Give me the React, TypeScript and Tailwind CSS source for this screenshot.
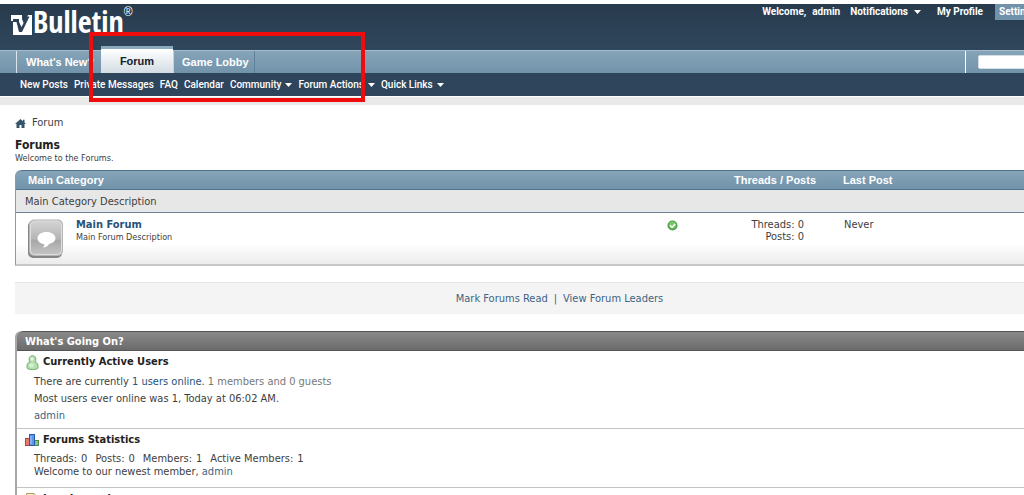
import type { ReactNode } from 'react';

const subLinks = [
  { label: 'New Posts' },
  { label: 'Private Messages' },
  { label: 'FAQ' },
  { label: 'Calendar' },
  { label: 'Community', menu: true },
  { label: 'Forum Actions', menu: true },
  { label: 'Quick Links', menu: true },
];

function Caret() {
  return (
    <svg className="h-1 w-[7px]" viewBox="0 0 7 4" fill="#fff" aria-hidden="true">
      <path d="M0 0h7L3.5 4z" />
    </svg>
  );
}

function Logo() {
  return (
    <a href="#" className="flex items-end text-white" aria-label="vBulletin">
      <svg className="mb-1 h-[22px] w-[22px]" viewBox="0 0 22 22" aria-hidden="true">
        <path fill="#fff" d="M0 1h11v4l2 5L17 1h4v20H2V7H0z" />
        <path fill="#2d4257" d="M2 5h6v3l2.500 5L16 2.500h2.500L11 18H8L5.500 8H2z" />
      </svg>
      <span className="font-['Open_Sans_Condensed','Noto_Sans_ExtraCondensed','Liberation_Sans_Narrow',sans-serif] text-[30px] leading-9 font-bold">
        Bulletin
      </span>
      <span className="mb-5 font-['Liberation_Sans',sans-serif] text-[12px] leading-4 font-normal">®</span>
    </a>
  );
}

function ForumIcon() {
  return (
    <svg className="h-[39px] w-9" viewBox="0 0 36 39" aria-hidden="true">
      <defs>
        <linearGradient id="tile" x1="0" y1="0" x2="0" y2="1">
          <stop offset="0" stopColor="#d4d4d4" />
          <stop offset=".55" stopColor="#b4b4b4" />
          <stop offset=".56" stopColor="#a6a6a6" />
          <stop offset="1" stopColor="#c4c4c4" />
        </linearGradient>
      </defs>
      <rect x="0" y="2" width="34" height="37" rx="5" fill="#858585" />
      <rect x="1" y="0.5" width="34" height="36.5" rx="5" fill="#b5b5b5" />
      <rect x="2.500" y="2" width="31" height="33.500" rx="4" fill="url(#tile)" stroke="#dedede" />
      <path
        fill="#fff"
        d="M18.500 13c-5 0-9 2.700-9 6.200 0 3.200 3 5.600 7 6l-1.200 3.600c3-.8 5-2.200 6-4 3.600-.8 6.200-3 6.200-5.600 0-3.500-4-6.200-9-6.200z"
      />
    </svg>
  );
}

function CheckIcon() {
  return (
    <svg className="h-[11px] w-[11px]" viewBox="0 0 11 11" role="img" aria-label="Open">
      <circle cx="5.500" cy="5.500" r="5" fill="#4fa644" />
      <circle cx="5.500" cy="5" r="3.600" fill="#7cc470" />
      <path d="M3 5.300l2 2 3.200-3.400" fill="none" stroke="#fff" strokeWidth="1.500" />
    </svg>
  );
}

function UserIcon() {
  return (
    <svg className="h-[15px] w-[13px]" viewBox="0 0 13 15" aria-hidden="true">
      <path
        d="M6.500 .7c2 0 3.400 1.500 3.400 3.400 0 1.200-.4 2-.9 2.700 2 .5 3 2.200 3 4.400v1.700c0 1-2.500 1.600-5.500 1.600S1 13.900 1 12.900v-1.700c0-2.200 1-3.900 3-4.400-.5-.7-.9-1.500-.9-2.700C3.100 2.200 4.500.7 6.500.7z"
        fill="#b3dfae"
        stroke="#6fae6b"
      />
      <ellipse cx="6" cy="4" rx="1.500" ry="1.800" fill="#e4f6e1" />
      <ellipse cx="5.500" cy="10.500" rx="2.500" ry="2" fill="#d7f0d3" />
    </svg>
  );
}

function StatsIcon() {
  return (
    <svg className="h-3 w-3.5" viewBox="0 0 14 12" aria-hidden="true">
      <rect x=".5" y="4.500" width="4" height="7" fill="#e8786c" stroke="#b5443c" />
      <rect x="9.500" y="6.500" width="4" height="5" fill="#86c283" stroke="#4f8b50" />
      <rect x="4.500" y=".5" width="5" height="11" fill="#5b95e6" stroke="#2c5bab" />
      <path d="M6 2v8" stroke="#a9ccfa" />
    </svg>
  );
}

function LegendIcon() {
  return (
    <svg className="h-3 w-3" viewBox="0 0 12 12" aria-hidden="true">
      <path d="M.5.500h7.500l3.500 3.500v7.500H.5z" fill="#f7edc0" stroke="#b39c52" />
      <path d="M8 .5V4h3.500" fill="#fff" stroke="#b39c52" />
    </svg>
  );
}

function Block({ icon, title, children }: { icon: ReactNode; title: string; children?: ReactNode }) {
  return (
    <section className="border-b border-[#c4c4c4] pt-1 pl-2">
      <h3 className="flex h-[14px] items-center text-[11px] leading-[14px] font-bold text-[#222]">
        <span className="flex w-[18px] shrink-0 justify-center pr-1">{icon}</span>
        {title}
      </h3>
      <div className="pl-[9px]">{children}</div>
    </section>
  );
}

export default function App() {
  return (
    <div className="relative min-h-screen overflow-hidden bg-white pt-1 font-['DejaVu_Sans_Condensed','DejaVu_Sans',sans-serif] text-[11px] text-[#3e3e3e]">
      <header className="font-['Liberation_Sans',Arial,sans-serif] font-bold text-white">
        <div className="flex h-[46px] items-start justify-between bg-linear-to-b from-[#283b4d] to-[#2f465c] pl-[11px]">
          <Logo />
          <div className="flex items-center font-['Roboto','Liberation_Sans',sans-serif] text-[10px] leading-4 whitespace-nowrap">
            <span className="mr-1.5">Welcome,</span>
            <a href="#" className="mr-2.5">admin</a>
            <button type="button" className="mr-4 flex items-center gap-1.5">
              Notifications <Caret />
            </button>
            <a href="#" className="mr-3">My Profile</a>
            <a href="#" className="w-[29px] overflow-hidden bg-[#7092aa] pl-1">Settings</a>
          </div>
        </div>

        <nav className="flex h-[23px] items-end border-t border-[#a5bccb] bg-linear-to-b from-[#86a4b8] to-[#7193aa] pl-4 text-[11px] leading-[22px]">
          <a href="#" className="w-[85px] border-l border-[#dbe5eb] pl-[9px] whitespace-nowrap">What's New?</a>
          <a
            href="#"
            className="w-[72px] border-t-3 border-[#8aa9bd] bg-linear-to-b from-white to-[#d3dde4] text-center leading-6 text-[#14202b]"
          >
            Forum
          </a>
          <a href="#" className="w-[82px] border-r border-l border-[#5f8098] border-l-[#c4d3dd] pl-2">Game Lobby</a>
          <div className="ml-auto flex h-[22px] w-[59px] items-center overflow-hidden border-l border-white pl-3">
            <input aria-label="Search" className="h-[14px] w-[150px] shrink-0 rounded-xs border border-[#d5dee4] bg-white" />
          </div>
        </nav>

        <nav className="flex h-[23px] items-center gap-1.5 bg-[#2f455b] pl-5 font-['Roboto','Liberation_Sans',sans-serif] text-[10px] font-medium whitespace-nowrap">
          {subLinks.map((link) => (
            <a key={link.label} href="#" className="flex items-center gap-1">
              {link.label}
              {link.menu && <Caret />}
            </a>
          ))}
        </nav>
        <div className="mt-px h-2 bg-[#e9e9e9]" />
      </header>

      <main className="pl-[15px]">
        <nav className="flex items-center gap-1.5 pt-[11px] leading-[14px]" aria-label="Breadcrumb">
          <svg className="h-[9px] w-[11px]" viewBox="0 0 11 9" fill="#34546b" aria-hidden="true">
            <path d="M5.500 0L0 5h1.500v4h3V6h2v3h3V5H11L9.500 3.600V.8H8v1.500z" />
          </svg>
          Forum
        </nav>

        <h1 className="mt-2 text-[12px] leading-[14px] font-bold text-[#222]">Forums</h1>
        <p className="text-[9px] leading-3">Welcome to the Forums.</p>

        <table className="mt-1.5 w-full table-fixed border-separate border-spacing-0 rounded-tl-md border-b-2 border-l border-b-[#c8c8c8] border-l-[#8b9aa5] text-left">
          <colgroup>
            <col />
            <col className="w-[52px]" />
            <col className="w-[120px]" />
            <col className="w-[208px]" />
          </colgroup>
          <thead>
            <tr className="h-5 font-['Liberation_Sans',Arial,sans-serif] text-[11px] leading-[18px] text-white">
              <th colSpan={2} className="rounded-tl-md border-t border-b border-[#4f7189] bg-linear-to-b from-[#86a4b8] to-[#7193aa] p-0 pl-3">
                Main Category
              </th>
              <th className="border-t border-b border-[#4f7189] bg-linear-to-b from-[#86a4b8] to-[#7193aa] p-0 text-right">
                Threads / Posts
              </th>
              <th className="border-t border-b border-[#4f7189] bg-linear-to-b from-[#86a4b8] to-[#7193aa] p-0 pl-[27px]">
                Last Post
              </th>
            </tr>
          </thead>
          <tbody>
            <tr>
              <td colSpan={4} className="h-[23px] border-b border-[#6b8296] bg-[#e7e7e7] p-0 pt-0.5 pl-[9px]">
                Main Category Description
              </td>
            </tr>
            <tr className="h-[51px] bg-linear-to-b from-white from-60% to-[#ececec] align-top">
              <td className="p-0 pt-1.5 pl-3">
                <div className="flex gap-3">
                  <ForumIcon />
                  <div>
                    <a href="#" className="block text-[11px] leading-3 font-bold text-[#255379]">Main Forum</a>
                    <p className="text-[9px] leading-3">Main Forum Description</p>
                  </div>
                </div>
              </td>
              <td className="p-0 pt-[7px] pl-[23px]">
                <CheckIcon />
              </td>
              <td className="p-0 pt-1.5 pr-3 text-right leading-3">
                Threads: 0<br />
                Posts: 0
              </td>
              <td className="p-0 pt-1.5 pl-7 leading-3">Never</td>
            </tr>
          </tbody>
        </table>

        <div className="mt-4 flex h-8 items-center justify-center border-t border-[#e6e6e6] bg-[#f4f4f4] pt-0.5 text-[#3d6482]">
          <div className="flex gap-1.5 pl-20">
            <a href="#">Mark Forums Read</a>
            <span>|</span>
            <a href="#">View Forum Leaders</a>
          </div>
        </div>

        <section className="mt-[17px] rounded-tl-md border-l-2 border-[#a8a8a8]">
          <h2 className="h-5 rounded-tl-md border-t border-b border-[#555] bg-linear-to-b from-[#8a8a8a] to-[#6b6b6b] pl-2 text-[11px] leading-[19px] font-bold text-white">
            What's Going On?
          </h2>
          <Block icon={<UserIcon />} title="Currently Active Users">
            <div className="pt-1 pb-1 leading-[17px]">
              <p>
                There are currently <a href="#" className="text-[#255379]">1 users online</a>.{' '}
                <span className="text-[#777]">1 members and 0 guests</span>
              </p>
              <p>Most users ever online was 1, Today at 06:02 AM.</p>
              <a href="#" className="block text-[#3d6482]">admin</a>
            </div>
          </Block>
          <Block icon={<StatsIcon />} title="Forums Statistics">
            <div className="pt-[5px] pb-[9px] leading-[13px]">
              <dl className="flex gap-2">
                <div className="flex gap-1"><dt>Threads:</dt><dd>0</dd></div>
                <div className="flex gap-1"><dt>Posts:</dt><dd>0</dd></div>
                <div className="flex gap-1"><dt>Members:</dt><dd>1</dd></div>
                <div className="flex gap-1"><dt>Active Members:</dt><dd>1</dd></div>
              </dl>
              <p>
                Welcome to our newest member, <a href="#" className="text-[#3d6482]">admin</a>
              </p>
            </div>
          </Block>
          <Block icon={<LegendIcon />} title="Icon Legend" />
        </section>
      </main>

      <div className="pointer-events-none absolute top-8 left-[89px] h-[70px] w-[276px] border-4 border-[#ee0c0c]" />
    </div>
  );
}
